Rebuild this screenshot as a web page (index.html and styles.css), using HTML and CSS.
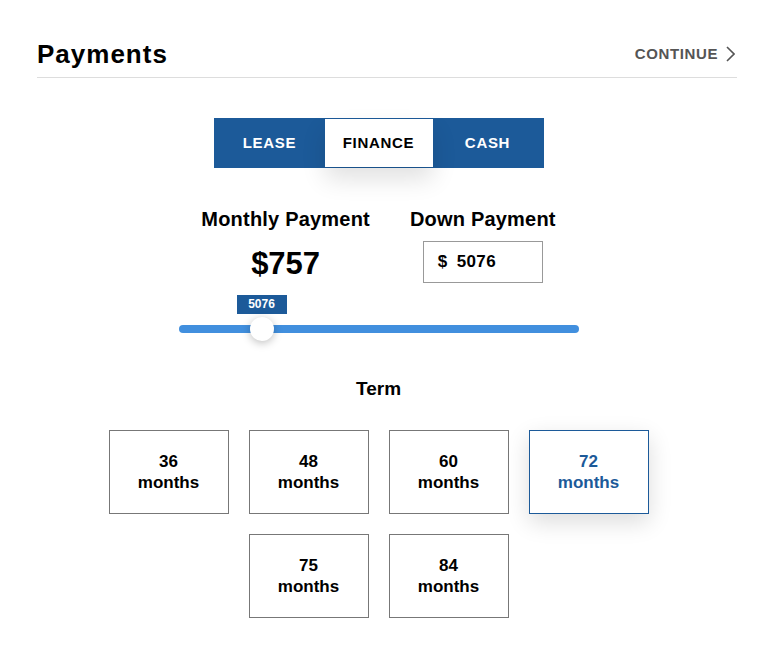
FILE: index.html
```html
<!DOCTYPE html>
<html lang="en">
<head>
<meta charset="utf-8">
<title>Payments</title>
<link rel="stylesheet" href="styles.css">
</head>
<body>
<div class="page">
  <header class="header">
    <h1 class="title">Payments</h1>
    <a class="continue" href="#">CONTINUE
      <svg class="chev" width="9" height="16" viewBox="0 0 9 16"><path d="M1 1 L8 8 L1 15" fill="none" stroke="#555" stroke-width="1.6"/></svg>
    </a>
  </header>

  <div class="tabs">
    <div class="tab">LEASE</div>
    <div class="tab active">FINANCE</div>
    <div class="tab">CASH</div>
  </div>

  <div class="amounts">
    <div class="col">
      <div class="label">Monthly Payment</div>
      <div class="monthly">$757</div>
    </div>
    <div class="col">
      <div class="label">Down Payment</div>
      <div class="input"><span class="cur">$</span><span class="val">5076</span></div>
    </div>
  </div>

  <div class="slider">
    <div class="tip" style="left:58px">5076</div>
    <div class="track"></div>
    <div class="thumb" style="left:71px"></div>
  </div>

  <div class="term-label">Term</div>
  <div class="terms">
    <div class="term"><span>36</span><span>months</span></div>
    <div class="term"><span>48</span><span>months</span></div>
    <div class="term"><span>60</span><span>months</span></div>
    <div class="term selected"><span>72</span><span>months</span></div>
    <div class="term"><span>75</span><span>months</span></div>
    <div class="term"><span>84</span><span>months</span></div>
  </div>
</div>
</body>
</html>
```

FILE: styles.css
```css
* { box-sizing: border-box; }
html, body { margin: 0; padding: 0; background: #fff; }
body { font-family: "Liberation Sans", Arial, sans-serif; color: #000; }

.page {
  width: 757px;
  display: flex;
  flex-direction: column;
  align-items: center;
}

.header {
  align-self: stretch;
  margin: 0 20px 0 37px;
  padding: 39px 0 8px;
  border-bottom: 1px solid #ddd;
  display: flex;
  align-items: center;
  justify-content: space-between;
}
.title {
  margin: 0;
  font-size: 26px;
  line-height: 30px;
  font-weight: bold;
  letter-spacing: 1px;
}
.continue {
  display: flex;
  align-items: center;
  gap: 8px;
  color: #555;
  text-decoration: none;
  font-size: 15px;
  line-height: 18px;
  font-weight: bold;
  letter-spacing: 0.6px;
  margin-right: 2px;
}
.chev { display: block; margin-top: -1px; }

.tabs {
  margin-top: 40px;
  display: flex;
  background: #1c5a99;
  padding: 1px;
}
.tab {
  width: 110px;
  height: 48px;
  line-height: 48px;
  text-align: center;
  color: #fff;
  font-size: 15px;
  font-weight: bold;
  letter-spacing: 0.7px;
}
.tab.active {
  width: 108px;
  background: #fff;
  color: #000;
  box-shadow: 0 12px 24px rgba(0,0,0,0.12);
  position: relative;
}

.amounts {
  margin-top: 39px;
  display: flex;
  gap: 40px;
}
.col {
  display: flex;
  flex-direction: column;
  align-items: center;
}
.label {
  font-size: 20px;
  line-height: 24px;
  font-weight: bold;
  letter-spacing: 0.2px;
}
.monthly {
  margin-top: 15px;
  font-size: 31px;
  line-height: 36px;
  font-weight: bold;
}
.input {
  margin-top: 10px;
  width: 120px;
  height: 42px;
  border: 1px solid #999;
  display: flex;
  align-items: center;
  padding-left: 14px;
  font-size: 17px;
  line-height: 40px;
  font-weight: bold;
  letter-spacing: 0.4px;
}
.cur { margin-right: 9px; }

.slider {
  position: relative;
  margin-top: 12px;
  width: 400px;
  height: 46px;
  padding-top: 30px;
}
.track {
  height: 8px;
  border-radius: 4px;
  background: #418fde;
}
.tip {
  position: absolute;
  top: 0;
  width: 50px;
  height: 19px;
  line-height: 19px;
  background: #1c5a99;
  color: #fff;
  font-size: 12px;
  font-weight: bold;
  text-align: center;
}
.thumb {
  position: absolute;
  top: 22px;
  width: 24px;
  height: 24px;
  border-radius: 50%;
  background: #fff;
  box-shadow: 0 2px 8px rgba(0,0,0,0.25);
}

.term-label {
  margin-top: 37px;
  font-size: 19px;
  line-height: 22px;
  font-weight: bold;
}
.terms {
  margin-top: 30px;
  width: 540px;
  display: flex;
  flex-wrap: wrap;
  justify-content: center;
  gap: 20px;
}
.term {
  width: 120px;
  height: 84px;
  border: 1px solid #777;
  display: flex;
  flex-direction: column;
  align-items: center;
  justify-content: center;
  font-size: 17px;
  line-height: 21px;
  font-weight: bold;
}
.term.selected {
  border-color: #1c5a99;
  color: #1c5a99;
  box-shadow: 0 8px 22px rgba(0,0,0,0.14);
}
```
